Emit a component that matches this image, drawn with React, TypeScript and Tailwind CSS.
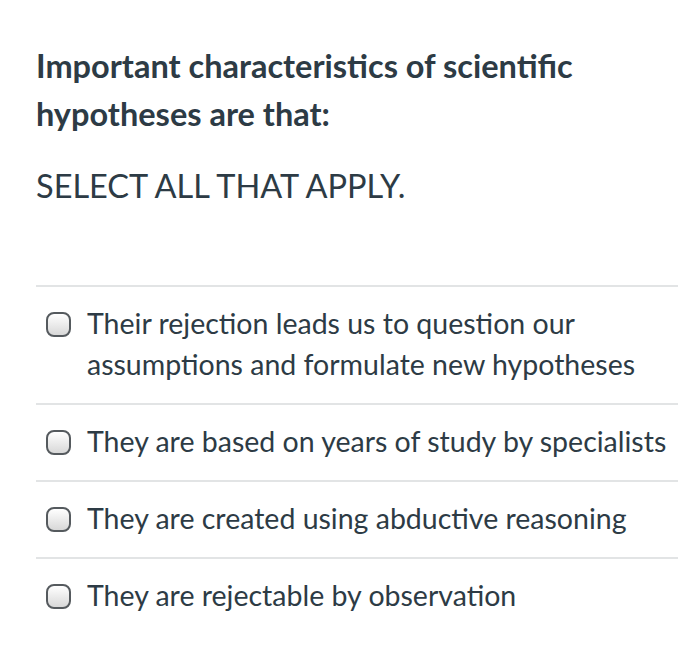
import React from "react";

const options = [
  "Their rejection leads us to question our assumptions and formulate new hypotheses",
  "They are based on years of study by specialists",
  "They are created using abductive reasoning",
  "They are rejectable by observation",
];

function Box() {
  return (
    <span className="mt-[9px] mr-[16px] h-[25px] w-[25px] shrink-0 rounded-[8px] border-2 border-[#555a5e] bg-gradient-to-b from-white to-[#d8d8d8]" />
  );
}

export default function App() {
  return (
    <div className="h-[658px] w-[700px] bg-white text-[#2d3b45]" style={{ fontFamily: "Lato, 'Noto Sans', sans-serif" }}>
      <div className="pl-[36px] pr-[22px] pt-[42px]">
        <h1 className="text-[32.5px] font-bold leading-[48px]">
          Important characteristics of scientific
          <br />
          hypotheses are that:
        </h1>
        <p className="mt-[24px] text-[32.5px] leading-[48px]">SELECT ALL THAT APPLY.</p>
        <div className="mt-[75px] border-t-2 border-[#e2e4e5]">
          {options.map((o, i) => (
            <div key={i} className={`flex items-start pt-[16px] pb-[18px] ${i < options.length - 1 ? "border-b-2 border-[#e2e4e5]" : ""}`}>
              <div className="pl-[10px] flex items-start">
                <Box />
                <span className="text-[28.5px] leading-[41px]">{o}</span>
              </div>
            </div>
          ))}
        </div>
      </div>
    </div>
  );
}
